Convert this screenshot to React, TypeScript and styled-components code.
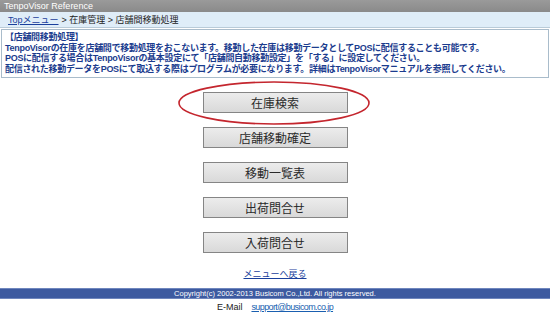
import React from "react";
import styled, { createGlobalStyle } from "styled-components";

const GlobalStyle = createGlobalStyle`
  html, body {
    margin: 0;
    padding: 0;
    background: #ffffff;
  }
  body {
    font-family: "Liberation Sans", "Noto Sans CJK JP", sans-serif;
  }
`;

const Page = styled.div`
  width: 550px;
  height: 323px;
  overflow: hidden;
  display: flex;
  flex-direction: column;
`;

const TitleBar = styled.div`
  height: 12px;
  background: linear-gradient(#9a9a9a, #8a8a8a);
  color: #ffffff;
  font-family: "Liberation Sans", sans-serif;
  font-size: 9px;
  line-height: 12px;
  padding-left: 4px;
`;

const Breadcrumb = styled.div`
  height: 15px;
  background: #dfedf8;
  border-bottom: 1px solid #b9cbd8;
  display: flex;
  align-items: center;
  gap: 3px;
  padding-left: 8px;
  font-size: 9px;
  color: #222222;
`;

const TopLink = styled.a`
  color: #1a3f9c;
  text-decoration: underline;
`;

const InfoBox = styled.div`
  margin: 1px 1px 0 1px;
  border: 1px solid #a9bccb;
  background: #ffffff;
  padding: 2px 0 3px 3px;
  color: #1b3c8e;
  font-size: 9px;
  font-weight: bold;
  line-height: 10.5px;
  letter-spacing: -0.3px;
`;

const MenuArea = styled.div`
  position: relative;
  display: flex;
  flex-direction: column;
  align-items: center;
  gap: 14px;
  padding-top: 14px;
`;

const MenuButton = styled.button`
  width: 145px;
  height: 21px;
  border: 1px solid #858585;
  background: linear-gradient(#ececec, #d9d9d9);
  font-family: "Noto Sans CJK JP", sans-serif;
  font-size: 12px;
  color: #2a2a2a;
  padding: 0;
  cursor: pointer;
`;

const Highlight = styled.svg`
  position: absolute;
  left: 176px;
  top: 1px;
  pointer-events: none;
`;

const BackLink = styled.a`
  align-self: center;
  margin-top: 15px;
  color: #1a3f9c;
  font-size: 9px;
  line-height: 12px;
  text-decoration: underline;
`;

const FooterBar = styled.div`
  margin-top: 8px;
  height: 9px;
  background: #3d5aa0;
  border-top: 1px solid #6f86bd;
  border-bottom: 1px solid #6f86bd;
  color: #ffffff;
  font-family: "Liberation Sans", sans-serif;
  font-size: 7.5px;
  line-height: 9px;
  text-align: center;
`;

const Contact = styled.div`
  display: flex;
  justify-content: center;
  gap: 9px;
  margin-top: 2px;
  font-family: "Liberation Sans", sans-serif;
  font-size: 9px;
  line-height: 12px;
  color: #222222;
`;

const MailLink = styled.a`
  color: #1a5fb0;
  text-decoration: underline;
  letter-spacing: -0.6px;
`;

const items = ["在庫検索", "店舗移動確定", "移動一覧表", "出荷問合せ", "入荷問合せ"];

export default function App() {
  return (
    <>
      <GlobalStyle />
      <Page>
        <TitleBar>TenpoVisor Reference</TitleBar>
        <Breadcrumb>
          <TopLink>Topメニュー</TopLink>
          <span>&gt; 在庫管理 &gt; 店舗間移動処理</span>
        </Breadcrumb>
        <InfoBox>
          <div>【店舗間移動処理】</div>
          <div>TenpoVisorの在庫を店舗間で移動処理をおこないます。移動した在庫は移動データとしてPOSに配信することも可能です。</div>
          <div>POSに配信する場合はTenpoVisorの基本設定にて「店舗間自動移動設定」を「する」に設定してください。</div>
          <div>配信された移動データをPOSにて取込する際はプログラムが必要になります。詳細はTenpoVisorマニュアルを参照してください。</div>
        </InfoBox>
        <MenuArea>
          {items.map((label) => (
            <MenuButton key={label}>{label}</MenuButton>
          ))}
          <Highlight width="196" height="48" viewBox="0 0 196 48">
            <ellipse cx="98" cy="24" rx="95" ry="21" fill="none" stroke="#c4262e" strokeWidth="1.6" />
          </Highlight>
        </MenuArea>
        <BackLink>メニューへ戻る</BackLink>
        <FooterBar>Copyright(c) 2002-2013 Busicom Co.,Ltd. All rights reserved.</FooterBar>
        <Contact>
          <span>E-Mail</span>
          <MailLink>support@busicom.co.jp</MailLink>
        </Contact>
      </Page>
    </>
  );
}
